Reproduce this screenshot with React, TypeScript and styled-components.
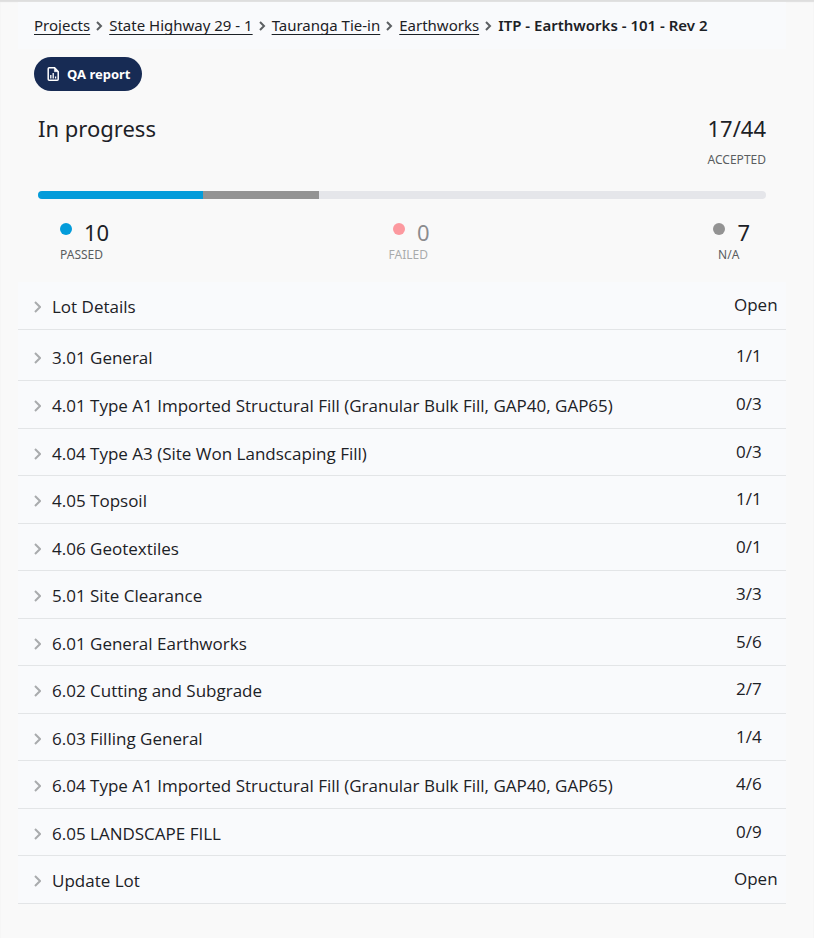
import React from "react";
import styled, { createGlobalStyle } from "styled-components";

const GlobalStyle = createGlobalStyle`
  * { box-sizing: border-box; }
  body {
    margin: 0;
    background: #f9f9f9;
    color: #1c2126;
    font-family: "Noto Sans", "Open Sans", sans-serif;
  }
  button { font: inherit; color: inherit; border: 0; cursor: pointer; }
`;

const Page = styled.main`
  padding: 2px 28px 34px 18px;
  box-shadow: inset 0 2px 1px #dedede;
`;

const Breadcrumbs = styled.nav`
  background: #f9fafc;
  padding: 12px 16px 13px;
`;

const CrumbList = styled.ol`
  display: flex;
  flex-wrap: wrap;
  align-items: center;
  margin: 0;
  padding: 0;
  list-style: none;
  font-size: 15px;
  line-height: 22px;
`;

const Crumb = styled.li`
  display: flex;
  align-items: center;
`;

const CrumbLink = styled.a`
  color: inherit;
  text-decoration: underline;
  text-decoration-thickness: 1px;
  text-decoration-skip-ink: none;
  text-underline-offset: 3px;
`;

const Current = styled.span`
  font-weight: 600;
`;

const CrumbChevron = styled.svg`
  width: 7px;
  height: 10px;
  margin: 2px 6px 0;
  fill: none;
  stroke: #5c5f62;
  stroke-width: 2;
`;

const Toolbar = styled.div`
  padding: 8px 16px 0;
`;

const ReportButton = styled.button`
  display: inline-flex;
  align-items: center;
  gap: 7px;
  height: 34px;
  padding: 0 11px 0 12px;
  border-radius: 17px;
  && { background: #172b54; color: #fff; font-size: 13px; font-weight: 700; }
`;

const Summary = styled.section`
  padding: 19px 20px 0;
`;

const SummaryHead = styled.div`
  display: flex;
  justify-content: space-between;
`;

const Status = styled.h1`
  margin: 0;
  font-size: 22px;
  line-height: 36px;
  font-weight: 400;
`;

const Accepted = styled.div`
  text-align: right;
`;

const Total = styled.div`
  font-size: 22px;
  line-height: 36px;
`;

const Caption = styled.div`
  font-size: 12px;
  line-height: 16px;
  color: #5a5d60;
`;

const AcceptedCaption = styled(Caption)`
  margin-top: 6px;
`;

const Track = styled.div`
  display: flex;
  height: 8px;
  margin-top: 23px;
  border-radius: 4px;
  overflow: hidden;
  background: #e5e6ea;
`;

const Segment = styled.div<{ $color: string; $share: number }>`
  width: ${(p) => p.$share}%;
  background: ${(p) => p.$color};
`;

const Stats = styled.div`
  display: flex;
  justify-content: space-between;
  padding: 18px 16px 0 22px;
`;

const Stat = styled.div<{ $muted?: boolean }>`
  display: flex;
  flex-direction: column;
  align-items: center;
  opacity: ${(p) => (p.$muted ? 0.5 : 1)};
`;

const StatValue = styled.div`
  display: flex;
  gap: 12px;
  font-size: 22px;
  line-height: 30px;
`;

const Dot = styled.span<{ $color: string }>`
  width: 12px;
  height: 12px;
  margin-top: 6px;
  border-radius: 50%;
  background: ${(p) => p.$color};
`;

const StatCaption = styled(Caption)`
  padding-right: 6px;
`;

const Sections = styled.ul`
  margin: 19px 0 0;
  padding: 0;
  list-style: none;
  background: #f9fafc;
`;

const SectionItem = styled.li`
  border-bottom: 1px solid #e3e5e7;
  height: 47px;
  &:nth-child(odd) { height: 48px; }
  &:nth-child(2) { height: 51px; padding-top: 3px; }
`;

const SectionButton = styled.button`
  display: grid;
  grid-template-columns: 13px 1fr 52px;
  column-gap: 5px;
  align-items: center;
  width: 100%;
  height: 47px;
  padding: 3px 0 0 16px;
  background: none;
  text-align: left;
  && { font-family: "Open Sans", "Noto Sans", sans-serif; font-size: 17px; line-height: 24px; }
`;

const SectionChevron = styled.svg`
  width: 7px;
  height: 12px;
  fill: none;
  stroke: #a9abad;
  stroke-width: 2;
`;

const SectionValue = styled.span<{ $count: boolean }>`
  padding: 0 0 5px ${(p) => (p.$count ? 2 : 0)}px;
`;

const crumbs = ["Projects", "State Highway 29 - 1", "Tauranga Tie-in", "Earthworks"];

const stats = [
  { label: "PASSED", value: 10, color: "#039cda" },
  { label: "FAILED", value: 0, color: "#ff3b47" },
  { label: "N/A", value: 7, color: "#939393" },
];

const total = 44;

const sections: [string, string][] = [
  ["Lot Details", "Open"],
  ["3.01 General", "1/1"],
  ["4.01 Type A1 Imported Structural Fill (Granular Bulk Fill, GAP40, GAP65)", "0/3"],
  ["4.04 Type A3 (Site Won Landscaping Fill)", "0/3"],
  ["4.05 Topsoil", "1/1"],
  ["4.06 Geotextiles", "0/1"],
  ["5.01 Site Clearance", "3/3"],
  ["6.01 General Earthworks", "5/6"],
  ["6.02 Cutting and Subgrade", "2/7"],
  ["6.03 Filling General", "1/4"],
  ["6.04 Type A1 Imported Structural Fill (Granular Bulk Fill, GAP40, GAP65)", "4/6"],
  ["6.05 LANDSCAPE FILL", "0/9"],
  ["Update Lot", "Open"],
];

const ReportIcon = () => (
  <svg width="14" height="16" viewBox="0 0 14 16" fill="none" stroke="#fff" strokeWidth="1.5" aria-hidden="true">
    <path d="M3.2 1.8h5.4l3.6 3.7v7.7q0 1-1 1H3.2q-1 0-1-1V2.8q0-1 1-1z" />
    <path d="M8.4 1.8v3.9h3.8z" fill="#fff" strokeWidth="0.5" />
    <path d="M4.8 9v3.6M7.2 7v5.6M9.6 10.6v2" strokeWidth="1.3" />
  </svg>
);

export default function App() {
  return (
    <>
      <GlobalStyle />
      <Page>
        <Breadcrumbs aria-label="Breadcrumb">
          <CrumbList>
            {crumbs.map((name) => (
              <Crumb key={name}>
                <CrumbLink href="#">{name}</CrumbLink>
                <CrumbChevron viewBox="0 0 7 10" aria-hidden="true">
                  <path d="M1 1l4 4-4 4" />
                </CrumbChevron>
              </Crumb>
            ))}
            <Crumb>
              <Current aria-current="page">ITP - Earthworks - 101 - Rev 2</Current>
            </Crumb>
          </CrumbList>
        </Breadcrumbs>
        <Toolbar>
          <ReportButton type="button">
            <ReportIcon />
            QA report
          </ReportButton>
        </Toolbar>
        <Summary>
          <SummaryHead>
            <Status>In progress</Status>
            <Accepted>
              <Total>17/44</Total>
              <AcceptedCaption>ACCEPTED</AcceptedCaption>
            </Accepted>
          </SummaryHead>
          <Track>
            {stats.map((s) => (
              <Segment key={s.label} $color={s.color} $share={(s.value / total) * 100} />
            ))}
          </Track>
          <Stats>
            {stats.map((s) => (
              <Stat key={s.label} $muted={s.value === 0}>
                <StatValue>
                  <Dot $color={s.color} />
                  {s.value}
                </StatValue>
                <StatCaption>{s.label}</StatCaption>
              </Stat>
            ))}
          </Stats>
        </Summary>
        <Sections>
          {sections.map(([title, value]) => (
            <SectionItem key={title}>
              <SectionButton type="button" aria-expanded="false">
                <SectionChevron viewBox="0 0 7 12" aria-hidden="true">
                  <path d="M1 1l5 5-5 5" />
                </SectionChevron>
                <span>{title}</span>
                <SectionValue $count={value !== "Open"}>{value}</SectionValue>
              </SectionButton>
            </SectionItem>
          ))}
        </Sections>
      </Page>
    </>
  );
}
